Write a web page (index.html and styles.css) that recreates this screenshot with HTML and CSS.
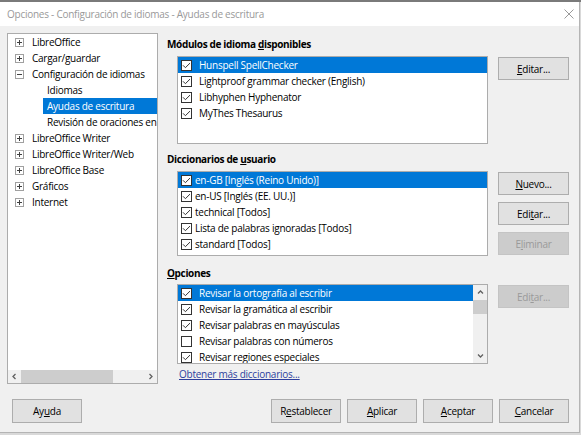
FILE: index.html
```html
<!DOCTYPE html>
<html lang="es">
<head>
<meta charset="utf-8">
<title>Opciones</title>
<link rel="stylesheet" href="styles.css">
</head>
<body>
<div class="top-strip"></div>
<div class="window">
  <div class="titlebar">
    <span class="title">Opciones - Configuración de idiomas - Ayudas de escritura</span>
    <svg class="close" width="10" height="10" viewBox="0 0 10 10"><path d="M0.5 0.5L9.5 9.5M9.5 0.5L0.5 9.5" stroke="#9a9a9a" stroke-width="1" fill="none"/></svg>
  </div>
  <div class="content">
    <div class="main">
      <div class="tree">
        <div class="tree-rows">
          <div class="trow"><svg class="exp" viewBox="0 0 9 9"><rect x=".5" y=".5" width="8" height="8" fill="#fff" stroke="#a0a0a0"/><path d="M2 4.5h5M4.5 2v5" stroke="#404040"/></svg>LibreOffice</div>
          <div class="trow"><svg class="exp" viewBox="0 0 9 9"><rect x=".5" y=".5" width="8" height="8" fill="#fff" stroke="#a0a0a0"/><path d="M2 4.5h5M4.5 2v5" stroke="#404040"/></svg>Cargar/guardar</div>
          <div class="trow"><svg class="exp" viewBox="0 0 9 9"><rect x=".5" y=".5" width="8" height="8" fill="#fff" stroke="#a0a0a0"/><path d="M2 4.5h5" stroke="#404040"/></svg>Configuración de idiomas</div>
          <div class="trow child">Idiomas</div>
          <div class="trow child sel">Ayudas de escritura</div>
          <div class="trow child">Revisión de oraciones en</div>
          <div class="trow"><svg class="exp" viewBox="0 0 9 9"><rect x=".5" y=".5" width="8" height="8" fill="#fff" stroke="#a0a0a0"/><path d="M2 4.5h5M4.5 2v5" stroke="#404040"/></svg>LibreOffice Writer</div>
          <div class="trow"><svg class="exp" viewBox="0 0 9 9"><rect x=".5" y=".5" width="8" height="8" fill="#fff" stroke="#a0a0a0"/><path d="M2 4.5h5M4.5 2v5" stroke="#404040"/></svg>LibreOffice Writer/Web</div>
          <div class="trow"><svg class="exp" viewBox="0 0 9 9"><rect x=".5" y=".5" width="8" height="8" fill="#fff" stroke="#a0a0a0"/><path d="M2 4.5h5M4.5 2v5" stroke="#404040"/></svg>LibreOffice Base</div>
          <div class="trow"><svg class="exp" viewBox="0 0 9 9"><rect x=".5" y=".5" width="8" height="8" fill="#fff" stroke="#a0a0a0"/><path d="M2 4.5h5M4.5 2v5" stroke="#404040"/></svg>Gráficos</div>
          <div class="trow"><svg class="exp" viewBox="0 0 9 9"><rect x=".5" y=".5" width="8" height="8" fill="#fff" stroke="#a0a0a0"/><path d="M2 4.5h5M4.5 2v5" stroke="#404040"/></svg>Internet</div>
        </div>
        <div class="hscroll">
          <div class="sarrow"><svg width="7" height="7" viewBox="0 0 7 7"><path d="M4.5 1L2 3.5 4.5 6" stroke="#606060" stroke-width="1.3" fill="none"/></svg></div>
          <div class="hthumb"></div>
          <div class="spacer"></div>
          <div class="sarrow"><svg width="7" height="7" viewBox="0 0 7 7"><path d="M2.5 1L5 3.5 2.5 6" stroke="#606060" stroke-width="1.3" fill="none"/></svg></div>
        </div>
      </div>
      <div class="panel">
        <div class="sec-title t1">Módulos de idioma <u>d</u>isponibles</div>
        <div class="sec s1">
          <div class="list l1">
            <div class="lrow sel"><svg class="cb" viewBox="0 0 11 11"><rect x=".5" y=".5" width="10" height="10" fill="#fff" stroke="#333"/><path d="M2 5.3l2.4 2.4L9 3.1" fill="none" stroke="#333"/></svg>Hunspell SpellChecker</div>
            <div class="lrow"><svg class="cb" viewBox="0 0 11 11"><rect x=".5" y=".5" width="10" height="10" fill="#fff" stroke="#333"/><path d="M2 5.3l2.4 2.4L9 3.1" fill="none" stroke="#333"/></svg>Lightproof grammar checker (English)</div>
            <div class="lrow"><svg class="cb" viewBox="0 0 11 11"><rect x=".5" y=".5" width="10" height="10" fill="#fff" stroke="#333"/><path d="M2 5.3l2.4 2.4L9 3.1" fill="none" stroke="#333"/></svg>Libhyphen Hyphenator</div>
            <div class="lrow"><svg class="cb" viewBox="0 0 11 11"><rect x=".5" y=".5" width="10" height="10" fill="#fff" stroke="#333"/><path d="M2 5.3l2.4 2.4L9 3.1" fill="none" stroke="#333"/></svg>MyThes Thesaurus</div>
          </div>
          <div class="btns">
            <div class="btn"><span><u>E</u>ditar...</span></div>
          </div>
        </div>

        <div class="sec-title t2">Diccionarios de <u>u</u>suario</div>
        <div class="sec s2">
          <div class="list l2">
            <div class="lrow sel"><svg class="cb" viewBox="0 0 11 11"><rect x=".5" y=".5" width="10" height="10" fill="#fff" stroke="#333"/><path d="M2 5.3l2.4 2.4L9 3.1" fill="none" stroke="#333"/></svg>en-GB [Inglés (Reino Unido)]</div>
            <div class="lrow"><svg class="cb" viewBox="0 0 11 11"><rect x=".5" y=".5" width="10" height="10" fill="#fff" stroke="#333"/><path d="M2 5.3l2.4 2.4L9 3.1" fill="none" stroke="#333"/></svg>en-US [Inglés (EE. UU.)]</div>
            <div class="lrow"><svg class="cb" viewBox="0 0 11 11"><rect x=".5" y=".5" width="10" height="10" fill="#fff" stroke="#333"/><path d="M2 5.3l2.4 2.4L9 3.1" fill="none" stroke="#333"/></svg>technical [Todos]</div>
            <div class="lrow"><svg class="cb" viewBox="0 0 11 11"><rect x=".5" y=".5" width="10" height="10" fill="#fff" stroke="#333"/><path d="M2 5.3l2.4 2.4L9 3.1" fill="none" stroke="#333"/></svg>Lista de palabras ignoradas [Todos]</div>
            <div class="lrow"><svg class="cb" viewBox="0 0 11 11"><rect x=".5" y=".5" width="10" height="10" fill="#fff" stroke="#333"/><path d="M2 5.3l2.4 2.4L9 3.1" fill="none" stroke="#333"/></svg>standard [Todos]</div>
          </div>
          <div class="btns">
            <div class="btn"><span><u>N</u>uevo...</span></div>
            <div class="btn"><span>Edi<u>t</u>ar...</span></div>
            <div class="btn disabled"><span>E<u>l</u>iminar</span></div>
          </div>
        </div>

        <div class="sec-title t3"><u>O</u>pciones</div>
        <div class="sec s3">
          <div class="list l3">
            <div class="rows">
              <div class="lrow sel"><svg class="cb" viewBox="0 0 11 11"><rect x=".5" y=".5" width="10" height="10" fill="#fff" stroke="#333"/><path d="M2 5.3l2.4 2.4L9 3.1" fill="none" stroke="#333"/></svg>Revisar la ortografía al escribir</div>
              <div class="lrow"><svg class="cb" viewBox="0 0 11 11"><rect x=".5" y=".5" width="10" height="10" fill="#fff" stroke="#333"/><path d="M2 5.3l2.4 2.4L9 3.1" fill="none" stroke="#333"/></svg>Revisar la gramática al escribir</div>
              <div class="lrow"><svg class="cb" viewBox="0 0 11 11"><rect x=".5" y=".5" width="10" height="10" fill="#fff" stroke="#333"/><path d="M2 5.3l2.4 2.4L9 3.1" fill="none" stroke="#333"/></svg>Revisar palabras en mayúsculas</div>
              <div class="lrow"><svg class="cb" viewBox="0 0 11 11"><rect x=".5" y=".5" width="10" height="10" fill="#fff" stroke="#333"/></svg>Revisar palabras con números</div>
              <div class="lrow"><svg class="cb" viewBox="0 0 11 11"><rect x=".5" y=".5" width="10" height="10" fill="#fff" stroke="#333"/><path d="M2 5.3l2.4 2.4L9 3.1" fill="none" stroke="#333"/></svg>Revisar regiones especiales</div>
            </div>
            <div class="vscroll">
              <div class="varrow"><svg width="7" height="7" viewBox="0 0 7 7"><path d="M1 4.5L3.5 2 6 4.5" stroke="#606060" stroke-width="1.3" fill="none"/></svg></div>
              <div class="vthumb"></div>
              <div class="spacer"></div>
              <div class="varrow"><svg width="7" height="7" viewBox="0 0 7 7"><path d="M1 2.5L3.5 5 6 2.5" stroke="#606060" stroke-width="1.3" fill="none"/></svg></div>
            </div>
          </div>
          <div class="btns">
            <div class="btn disabled"><span>Edi<u>t</u>ar...</span></div>
          </div>
        </div>
        <div class="link">Obtener más diccionarios...</div>
      </div>
    </div>
    <div class="footer">
      <div class="btn fbtn"><span>Ay<u>u</u>da</span></div>
      <div class="fright">
        <div class="btn fbtn"><span>R<u>e</u>stablecer</span></div>
        <div class="btn fbtn"><span><u>A</u>plicar</span></div>
        <div class="btn fbtn"><span><u>A</u>ceptar</span></div>
        <div class="btn fbtn"><span><u>C</u>ancelar</span></div>
      </div>
    </div>
  </div>
</div>
</body>
</html>
```
FILE: styles.css
```css
html, body {
  margin: 0;
  padding: 0;
}
body {
  width: 581px;
  height: 435px;
  overflow: hidden;
  background: #d9d9d9;
  font-family: "Open Sans", "Noto Sans", sans-serif;
  font-size: 10px;
  letter-spacing: -0.25px;
  color: #000;
}
u {
  text-decoration: underline;
  text-underline-offset: 1px;
}
.top-strip {
  height: 2px;
  background: #7a7a7a;
}
.window {
  width: 579px;
  height: 430px;
  border-right: 1px solid #b4b4b4;
  border-bottom: 1px solid #b4b4b4;
  background: #f0f0f0;
  display: flex;
  flex-direction: column;
}
.titlebar {
  height: 24px;
  flex: none;
  background: #fff;
  display: flex;
  align-items: center;
  justify-content: space-between;
  padding: 0 5px 0 7px;
}
.title {
  color: #999;
  white-space: nowrap;
}
.close {
  display: block;
}
.content {
  flex: 1;
  padding: 7px 10px 0 7px;
  display: flex;
  flex-direction: column;
}
.main {
  display: flex;
  height: 351px;
}
.tree {
  width: 151px;
  box-sizing: border-box;
  border: 1px solid #acacac;
  background: #fff;
  display: flex;
  flex-direction: column;
  overflow: hidden;
}
.tree-rows {
  flex: 1;
  overflow: hidden;
}
.trow {
  height: 16px;
  display: flex;
  align-items: center;
  white-space: nowrap;
  padding-left: 7px;
  overflow: hidden;
}
.trow .exp {
  width: 9px;
  height: 9px;
  flex: none;
  margin-right: 8px;
}
.trow.child {
  margin-left: 35px;
  padding-left: 4px;
}
.sel {
  background: #0078d7;
  color: #fff;
}
.hscroll {
  height: 13px;
  flex: none;
  display: flex;
  background: #f0f0f0;
}
.sarrow {
  width: 13px;
  flex: none;
  display: flex;
  align-items: center;
  justify-content: center;
}
.hthumb {
  width: 92px;
  background: #cdcdcd;
}
.spacer {
  flex: 1;
}
.panel {
  margin-left: 9px;
  width: 402px;
  display: flex;
  flex-direction: column;
}
.sec-title {
  font-weight: 700;
  height: 16px;
  line-height: 16px;
  white-space: nowrap;
  letter-spacing: -0.35px;
}
.t1 { margin-top: 3px; }
.t2 { margin-top: 7px; }
.t3 { margin-top: 9px; }
.sec {
  display: flex;
  gap: 10px;
  padding-left: 10px;
}
.s1, .s2 { margin-top: 4px; }
.s3 { margin-top: 3px; }
.list {
  width: 311px;
  box-sizing: border-box;
  border: 1px solid #acacac;
  background: #fff;
  overflow: hidden;
}
.l1 { height: 88px; }
.l2 { height: 85px; }
.l3 {
  height: 80px;
  display: flex;
}
.l3 .rows {
  flex: 1;
  min-width: 0;
}
.lrow {
  height: 16px;
  display: flex;
  align-items: center;
  padding-left: 3px;
  white-space: nowrap;
}
.cb {
  width: 11px;
  height: 11px;
  flex: none;
  margin-right: 7px;
}
.l2 .cb {
  margin-right: 3px;
}
.vscroll {
  width: 14px;
  flex: none;
  background: #f0f0f0;
  display: flex;
  flex-direction: column;
}
.varrow {
  height: 15px;
  flex: none;
  display: flex;
  align-items: center;
  justify-content: center;
}
.vthumb {
  height: 14px;
  background: #cdcdcd;
}
.btns {
  display: flex;
  flex-direction: column;
  gap: 7px;
  padding-top: 1px;
}
.btn {
  box-sizing: border-box;
  width: 71px;
  height: 23px;
  border: 1px solid #adadad;
  background: #e1e1e1;
  display: flex;
  align-items: center;
  justify-content: center;
  white-space: nowrap;
}
.btn.disabled {
  background: #cccccc;
  border-color: #c4c4c4;
  color: #9a9a9a;
}
.link {
  margin-top: 2px;
  height: 16px;
  line-height: 16px;
  padding-left: 12px;
  color: #2d3f9e;
  text-decoration: underline;
  text-underline-offset: 1px;
}
.footer {
  margin-top: 15px;
  display: flex;
  padding-left: 5px;
}
.fbtn {
  width: 70px;
  height: 24px;
}
.fright {
  margin-left: auto;
  display: flex;
  gap: 6px;
}
```
